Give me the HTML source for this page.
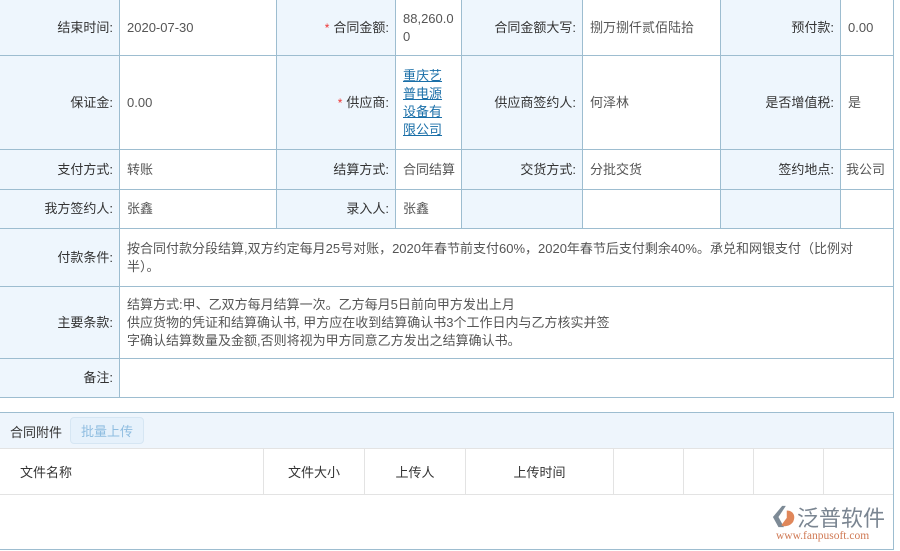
<!DOCTYPE html>
<html><head><meta charset="utf-8"><style>
*{margin:0;padding:0;box-sizing:border-box}
body{width:900px;height:551px;background:#fff;position:relative;overflow:hidden;font-family:"Liberation Sans","Noto Sans CJK SC",sans-serif;font-size:13px;color:#555}
.c{position:absolute;border-right:1px solid #9dbdd0;border-bottom:1px solid #9dbdd0;display:flex;align-items:center;padding:0 7px;line-height:18px}
.l{background:#eef6fd;justify-content:flex-end;color:#333;padding-right:6px}
.v{background:#fff}
.r{color:#e33;margin-right:4px;font-size:12px}
a{color:#1a6fa8;text-decoration:underline}
.h{position:absolute;top:449px;height:46px;border-right:1px solid #e3e3e3;border-bottom:1px solid #e3e3e3;display:flex;align-items:center;justify-content:center;color:#333}
</style></head><body>
<div class="c l" style="left:0;top:0;width:120px;height:56px">结束时间:</div>
<div class="c v" style="left:120px;top:0;width:157px;height:56px">2020-07-30</div>
<div class="c l" style="left:277px;top:0;width:119px;height:56px"><span class="r">*</span>合同金额:</div>
<div class="c v" style="left:396px;top:0;width:66px;height:56px;word-break:break-all">88,260.00</div>
<div class="c l" style="left:462px;top:0;width:121px;height:56px">合同金额大写:</div>
<div class="c v" style="left:583px;top:0;width:138px;height:56px">捌万捌仟贰佰陆拾</div>
<div class="c l" style="left:721px;top:0;width:120px;height:56px">预付款:</div>
<div class="c v" style="left:841px;top:0;width:53px;height:56px">0.00</div>
<div class="c l" style="left:0;top:56px;width:120px;height:94px">保证金:</div>
<div class="c v" style="left:120px;top:56px;width:157px;height:94px">0.00</div>
<div class="c l" style="left:277px;top:56px;width:119px;height:94px"><span class="r">*</span>供应商:</div>
<div class="c v" style="left:396px;top:56px;width:66px;height:94px"><a>重庆艺普电源设备有限公司</a></div>
<div class="c l" style="left:462px;top:56px;width:121px;height:94px">供应商签约人:</div>
<div class="c v" style="left:583px;top:56px;width:138px;height:94px">何泽林</div>
<div class="c l" style="left:721px;top:56px;width:120px;height:94px">是否增值税:</div>
<div class="c v" style="left:841px;top:56px;width:53px;height:94px">是</div>
<div class="c l" style="left:0;top:150px;width:120px;height:40px">支付方式:</div>
<div class="c v" style="left:120px;top:150px;width:157px;height:40px">转账</div>
<div class="c l" style="left:277px;top:150px;width:119px;height:40px">结算方式:</div>
<div class="c v" style="left:396px;top:150px;width:66px;height:40px;white-space:nowrap">合同结算</div>
<div class="c l" style="left:462px;top:150px;width:121px;height:40px">交货方式:</div>
<div class="c v" style="left:583px;top:150px;width:138px;height:40px">分批交货</div>
<div class="c l" style="left:721px;top:150px;width:120px;height:40px">签约地点:</div>
<div class="c v" style="left:841px;top:150px;width:53px;height:40px;white-space:nowrap;padding-left:5px">我公司</div>
<div class="c l" style="left:0;top:190px;width:120px;height:39px">我方签约人:</div>
<div class="c v" style="left:120px;top:190px;width:157px;height:39px">张鑫</div>
<div class="c l" style="left:277px;top:190px;width:119px;height:39px">录入人:</div>
<div class="c v" style="left:396px;top:190px;width:66px;height:39px">张鑫</div>
<div class="c l" style="left:462px;top:190px;width:121px;height:39px"></div>
<div class="c v" style="left:583px;top:190px;width:138px;height:39px"></div>
<div class="c l" style="left:721px;top:190px;width:120px;height:39px"></div>
<div class="c v" style="left:841px;top:190px;width:53px;height:39px"></div>
<div class="c l" style="left:0;top:229px;width:120px;height:58px">付款条件:</div>
<div class="c v" style="left:120px;top:229px;width:774px;height:58px"><div>按合同付款分段结算,双方约定每月25号对账，2020年春节前支付60%，2020年春节后支付剩余40%。承兑和网银支付（比例对<br>半）。</div></div>
<div class="c l" style="left:0;top:287px;width:120px;height:72px">主要条款:</div>
<div class="c v" style="left:120px;top:287px;width:774px;height:72px">结算方式:甲、乙双方每月结算一次。乙方每月5日前向甲方发出上月<br>供应货物的凭证和结算确认书, 甲方应在收到结算确认书3个工作日内与乙方核实并签<br>字确认结算数量及金额,否则将视为甲方同意乙方发出之结算确认书。</div>
<div class="c l" style="left:0;top:359px;width:120px;height:39px">备注:</div>
<div class="c v" style="left:120px;top:359px;width:774px;height:39px"></div>
<div style="position:absolute;left:0;top:412px;width:894px;height:138px;border-top:1px solid #9dbdd0;border-right:1px solid #9dbdd0;border-bottom:1px solid #9dbdd0"></div>
<div style="position:absolute;left:0;top:413px;width:893px;height:36px;background:#eef5fc;border-bottom:1px solid #e3e3e3"></div>
<div style="position:absolute;left:10px;top:422px;color:#333">合同附件</div>
<div style="position:absolute;left:70px;top:417px;width:74px;height:27px;border:1px solid #d6e6f3;border-radius:4px;background:#e6f1fb;color:#8fbde0;display:flex;align-items:center;justify-content:center">批量上传</div>
<div class="h" style="left:0;width:264px;justify-content:flex-start;padding-left:20px">文件名称</div>
<div class="h" style="left:264px;width:101px">文件大小</div>
<div class="h" style="left:365px;width:101px">上传人</div>
<div class="h" style="left:466px;width:148px">上传时间</div>
<div class="h" style="left:614px;width:70px"></div>
<div class="h" style="left:684px;width:70px"></div>
<div class="h" style="left:754px;width:70px"></div>
<div class="h" style="left:824px;width:69px;border-right:none"></div>
<svg style="position:absolute;left:771px;top:505px" width="26" height="24" viewBox="0 0 28 26"><path d="M12 1 L2 13 L8 24 L14 24 L8 13 L16 1Z" fill="#7d8a96"/><path d="M17 6 C24 6 27 12 24 18 C21 23 14 24 11 22 L17 14Z" fill="#e0875a"/></svg>
<div style="position:absolute;left:797px;top:504px;font-size:22px;color:#7a8591;font-family:'Noto Sans CJK SC',sans-serif;line-height:26px">泛普软件</div>
<div style="position:absolute;left:776px;top:530px;font-size:11.5px;color:#d07a55;font-family:'Liberation Serif',serif">www.fanpusoft.com</div>
</body></html>
